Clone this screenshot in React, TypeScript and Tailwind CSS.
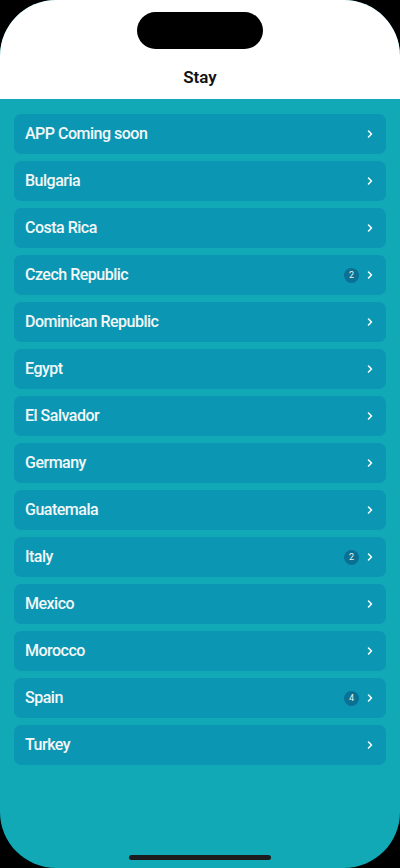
import { ChevronRight } from 'lucide-react'

type Place = {
  name: string
  count?: number
}

const places: Place[] = [
  { name: 'APP Coming soon' },
  { name: 'Bulgaria' },
  { name: 'Costa Rica' },
  { name: 'Czech Republic', count: 2 },
  { name: 'Dominican Republic' },
  { name: 'Egypt' },
  { name: 'El Salvador' },
  { name: 'Germany' },
  { name: 'Guatemala' },
  { name: 'Italy', count: 2 },
  { name: 'Mexico' },
  { name: 'Morocco' },
  { name: 'Spain', count: 4 },
  { name: 'Turkey' },
]

export default function App() {
  return (
    <div className="w-[400px] h-[868px] bg-black overflow-hidden" style={{ fontFamily: 'Roboto, "Noto Sans", sans-serif' }}>
      <div className="h-full flex flex-col rounded-[56px] overflow-hidden bg-[#11a9b6]">
        {/* шапка */}
        <header className="h-[99px] bg-white flex flex-col items-center shrink-0">
          <div className="mt-[12px] w-[126px] h-[37px] rounded-full bg-black" />
          <h1 className="mt-[17px] text-[17px] leading-[22px] font-semibold text-[#111]">Stay</h1>
        </header>

        <ul className="flex-1 flex flex-col gap-[7px] px-[14px] pt-[15px]">
          {places.map((p) => (
            <li
              key={p.name}
              className="h-[40px] shrink-0 rounded-[7px] bg-[#0b97b4] flex items-center pl-[11px] pr-[10px]"
            >
              <span className="flex-1 text-[16px] font-medium text-[#f4f8f8] tracking-[-0.5px]">{p.name}</span>
              {p.count && (
                <span className="w-[15px] h-[15px] rounded-full bg-[#0a7094] text-[9px] leading-none text-[#e6f3f0] flex items-center justify-center mr-[5px]">
                  {p.count}
                </span>
              )}
              <ChevronRight className="w-[12px] h-[12px] text-white" strokeWidth={3} />
            </li>
          ))}
        </ul>

        <div className="h-[13px] flex justify-center shrink-0">
          <div className="w-[142px] h-[5px] rounded-full bg-[#1c1c1e]" />
        </div>
      </div>
    </div>
  )
}
